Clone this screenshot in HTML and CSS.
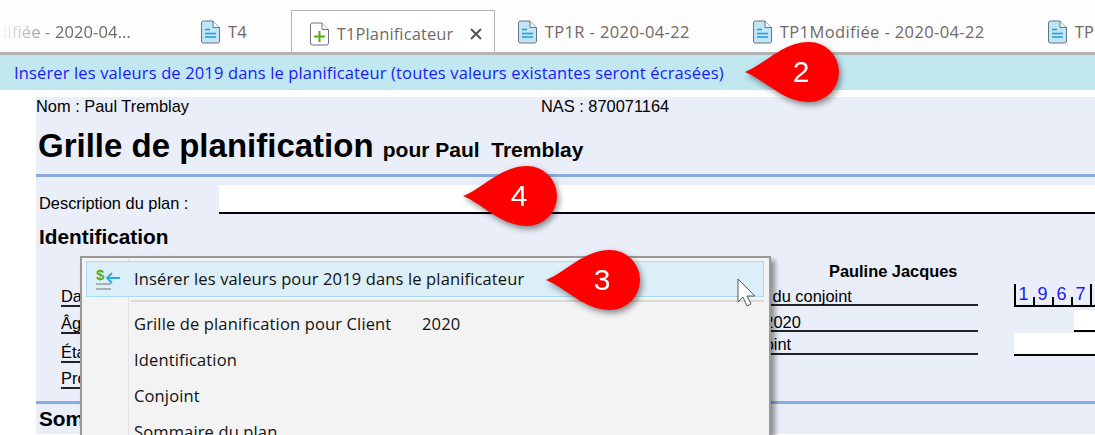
FILE: index.html
```html
<!DOCTYPE html>
<html lang="fr">
<head>
    <meta charset="UTF-8">
    <meta name="viewport" content="width=device-width, initial-scale=1.0">
    <title>T1Planificateur</title>
    <link rel="stylesheet" href="styles.css">
</head>
<body>
    <header class="tab-bar">
        <div class="tab tab-first"><span>TP1Modifiée - 2020-04...</span></div>
        <div class="tab tab-t4">
            <svg class="doc-icon" viewBox="0 0 19 24"><path d="M.5 3a2 2 0 0 1 2-2H12l6.500 6.500V21a2 2 0 0 1-2 2h-14a2 2 0 0 1-2-2z" fill="#bfe5f6" stroke="#68757c"/><path d="M12 1v6.500h6.500" fill="#eef8fc" stroke="#68757c"/><path d="M4 9.500h5M4 13.500h11M4 17h11" stroke="#1c9fe2" stroke-width="1.500"/></svg>
            <span>T4</span>
        </div>
        <div class="tab tab-active">
            <svg class="doc-icon" viewBox="0 0 19 24"><path d="M.5 3a2 2 0 0 1 2-2H12l6.500 6.500V21a2 2 0 0 1-2 2h-14a2 2 0 0 1-2-2z" fill="#fff" stroke="#68757c"/><path d="M12 1v6.500h6.500" fill="#fff" stroke="#68757c"/><path d="M9.500 9v11M4 14.500h11" stroke="#5fa813" stroke-width="2"/></svg>
            <span>T1Planificateur</span>
            <svg class="tab-close" viewBox="0 0 12 12"><path d="M1 1l10 10M11 1L1 11" stroke="#555" stroke-width="2"/></svg>
        </div>
        <div class="tab tab-dated">
            <svg class="doc-icon" viewBox="0 0 19 24"><path d="M.5 3a2 2 0 0 1 2-2H12l6.500 6.500V21a2 2 0 0 1-2 2h-14a2 2 0 0 1-2-2z" fill="#bfe5f6" stroke="#68757c"/><path d="M12 1v6.500h6.500" fill="#eef8fc" stroke="#68757c"/><path d="M4 9.500h5M4 13.500h11M4 17h11" stroke="#1c9fe2" stroke-width="1.500"/></svg>
            <span>TP1R - 2020-04-22</span>
        </div>
        <div class="tab tab-dated">
            <svg class="doc-icon" viewBox="0 0 19 24"><path d="M.5 3a2 2 0 0 1 2-2H12l6.500 6.500V21a2 2 0 0 1-2 2h-14a2 2 0 0 1-2-2z" fill="#bfe5f6" stroke="#68757c"/><path d="M12 1v6.500h6.500" fill="#eef8fc" stroke="#68757c"/><path d="M4 9.500h5M4 13.500h11M4 17h11" stroke="#1c9fe2" stroke-width="1.500"/></svg>
            <span>TP1Modifiée - 2020-04-22</span>
        </div>
        <div class="tab">
            <svg class="doc-icon" viewBox="0 0 19 24"><path d="M.5 3a2 2 0 0 1 2-2H12l6.500 6.500V21a2 2 0 0 1-2 2h-14a2 2 0 0 1-2-2z" fill="#bfe5f6" stroke="#68757c"/><path d="M12 1v6.500h6.500" fill="#eef8fc" stroke="#68757c"/><path d="M4 9.500h5M4 13.500h11M4 17h11" stroke="#1c9fe2" stroke-width="1.500"/></svg>
            <span>TP1</span>
        </div>
    </header>

    <div class="info-bar">Insérer les valeurs de 2019 dans le planificateur (toutes valeurs existantes seront écrasées)</div>

    <main class="plan">
        <div class="plan-head">
            <span class="plan-name">Nom : Paul Tremblay</span>
            <span>NAS : 870071164</span>
        </div>
        <h1 class="plan-title">Grille de planification <small>pour Paul&nbsp; Tremblay</small></h1>
        <div class="plan-desc">
            <span class="plan-desc-label">Description du plan :</span>
            <div class="field"></div>
        </div>
        <h2 class="section-title">Identification</h2>
        <div class="ident">
            <div class="ident-left">
                <div class="line line-a">Date de naissance</div>
                <div class="line line-b">Âge à la fin de 2020</div>
                <div class="line line-c">État civil</div>
                <div class="line line-d">Province</div>
            </div>
            <div class="ident-right">
                <div class="spouse-name">Pauline Jacques</div>
                <div class="ident-row row-a">
                    <div class="line">Date naissance du conjoint</div>
                    <div class="comb">
                        <span class="digit major">1</span>
                        <span class="digit">9</span>
                        <span class="digit">6</span>
                        <span class="digit">7</span>
                        <span class="digit major"></span>
                    </div>
                </div>
                <div class="ident-row row-b">
                    <div class="line">Âge à la fin de 2020</div>
                    <div class="field field-short"></div>
                </div>
                <div class="ident-row row-c">
                    <div class="line">État civil conjoint</div>
                    <div class="field"></div>
                </div>
            </div>
        </div>
        <h2 class="section-title section-next">Sommaire du plan</h2>
    </main>

    <div class="menu">
        <div class="menu-item menu-item-hot">
            <svg class="menu-icon" viewBox="0 0 26 26">
                <text x="1" y="15" class="menu-icon-dollar">$</text>
                <path d="M25 13H12M17 8l-5 5 5 5" fill="none" stroke="#29a9e1" stroke-width="1.800"/>
                <path d="M1 19h15M1 24h15" stroke="#9a9a9a" stroke-width="1.500"/>
            </svg>
            <span>Insérer les valeurs pour 2019 dans le planificateur</span>
        </div>
        <div class="menu-sep"></div>
        <div class="menu-item"><span class="menu-wide">Grille de planification pour Client</span><span>2020</span></div>
        <div class="menu-item">Identification</div>
        <div class="menu-item">Conjoint</div>
        <div class="menu-item">Sommaire du plan</div>
    </div>

    <svg class="cursor" viewBox="0 0 20 29"><path d="M1 1v23l5-5 4 9 4-2-4-8h8z" fill="#fff" stroke="#555"/></svg>

    <div class="callout callout-2">
        <svg viewBox="0 0 94 60"><path d="M0 30C20 22 38 0 64 0a30 30 0 0 1 0 60C38 60 20 38 0 30z" fill="#f00"/></svg>
        <span>2</span>
    </div>
    <div class="callout callout-3">
        <svg viewBox="0 0 94 60"><path d="M0 30C20 22 38 0 64 0a30 30 0 0 1 0 60C38 60 20 38 0 30z" fill="#f00"/></svg>
        <span>3</span>
    </div>
    <div class="callout callout-4">
        <svg viewBox="0 0 94 60"><path d="M0 30C20 22 38 0 64 0a30 30 0 0 1 0 60C38 60 20 38 0 30z" fill="#f00"/></svg>
        <span>4</span>
    </div>
</body>
</html>
```

FILE: styles.css
```css
html, body {
    height: 435px;
    overflow: hidden;
}

body {
    margin: 0;
    position: relative;
    background-color: #fff;
    color: #000;
    font-family: "Liberation Sans", Arial, sans-serif;
    font-size: 16.400px;
}

/* tabs */
.tab-bar {
    display: flex;
    align-items: stretch;
    height: 52px;
    background-color: #fdfdfd;
    border-bottom: 3px solid #b4b4b4;
    overflow: hidden;
    font-family: "Open Sans", sans-serif;
    font-size: 16.500px;
    letter-spacing: .12px;
    color: #6f6a66;
}

.tab {
    display: flex;
    align-items: center;
    flex-shrink: 0;
    gap: 8px;
    padding: 11px 40px 0 23px;
    white-space: nowrap;
}

.tab-dated {
    letter-spacing: .38px;
}

.tab-first {
    width: 131px;
    padding: 11px 47px 0 0;
    justify-content: flex-end;
    overflow: hidden;
    -webkit-mask-image: linear-gradient(to right, transparent, #000 60px);
    mask-image: linear-gradient(to right, transparent, #000 60px);
}

.tab-t4 {
    padding-right: 44px;
}

.tab-active {
    margin-top: 10px;
    margin-bottom: -3px;
    width: 204px;
    box-sizing: border-box;
    padding: 1px 10px 0 18px;
    background-color: #fff;
    border: 1px solid #b4b4b4;
    border-bottom: none;
}

.doc-icon {
    width: 19px;
    height: 24px;
    flex-shrink: 0;
}

.tab-close {
    width: 12px;
    height: 12px;
    margin-left: 9px;
}

/* blue bar */
.info-bar {
    height: 35px;
    line-height: 36px;
    padding-left: 14px;
    background-color: #c1e8f0;
    color: #1a1aff;
    font-family: "Open Sans", sans-serif;
    font-size: 16.500px;
    letter-spacing: .14px;
    white-space: nowrap;
}

/* form */
.plan {
    margin: 7px 0 0 36px;
    background-color: #e9eef8;
}

.plan-head {
    display: flex;
    height: 20px;
    line-height: 19px;
}

.plan-name {
    width: 505px;
}

.plan-title {
    margin: 0;
    padding: 10px 0 0 2px;
    height: 47px;
    border-bottom: 3px solid #8aacdc;
    font-size: 33px;
    line-height: 38px;
    white-space: nowrap;
}

.plan-title small {
    font-size: 21px;
}

.plan-desc {
    display: flex;
    margin-top: 8px;
    height: 29px;
}

.plan-desc-label {
    width: 180px;
    padding: 9px 0 0 3px;
    line-height: 18px;
}

.field {
    flex: 1;
    background-color: #fff;
    border-bottom: 2px solid #000;
}

.section-title {
    margin: 0;
    padding-left: 3px;
    font-size: 20.800px;
    line-height: 22px;
}

.plan-desc + .section-title {
    margin-top: 12px;
}

.ident {
    display: flex;
    height: 153px;
    border-bottom: 3px solid #8aacdc;
}

.ident-left {
    flex: 0 0 619px;
    padding-left: 25px;
    box-sizing: border-box;
}

.ident-right {
    flex: 1;
    min-width: 0;
    padding-top: 14px;
}

.line {
    border-bottom: 2px solid #222;
    line-height: 18px;
    white-space: nowrap;
    box-sizing: border-box;
}

.line-a { margin-top: 30px; height: 29px; padding-top: 9px; }
.line-b { height: 27px; padding-top: 7px; }
.line-c { height: 29px; padding-top: 9px; }
.line-d { height: 26px; padding-top: 6px; }

.spouse-name {
    padding-left: 174px;
    height: 18px;
    line-height: 18px;
    font-weight: bold;
}

.ident-row {
    display: flex;
    gap: 36px;
}

.ident-row .line {
    width: 323px;
    flex-shrink: 0;
}

.row-a { height: 26px; }
.row-a .line { padding-top: 7px; }
.row-b { height: 26px; }
.row-b .line { padding-top: 7px; }
.row-b .field { margin-top: 4px; }
.row-c { height: 24px; }
.row-c .line { height: 23px; padding: 3px 0 0 14px; }
.row-c .field { margin-top: 1px; }

.comb {
    display: flex;
    flex: 1;
    box-sizing: border-box;
    height: 23px;
    margin-top: 4px;
    border-bottom: 2px solid #000;
    overflow: hidden;
}

.digit {
    flex: 0 0 19px;
    text-align: center;
    line-height: 20px;
    font-size: 18px;
    color: #1a1aff;
    background: linear-gradient(#000, #000) left bottom / 2px 8px no-repeat;
}

.digit.major {
    background-size: 2px 21px;
}

.field-short {
    margin-left: 60px;
}

.section-next {
    height: 26px;
    padding-top: 4px;
    background-color: #e9eef8;
}

/* context menu */
.menu {
    position: absolute;
    left: 80px;
    top: 256px;
    width: 678px;
    height: 174px;
    padding: 3px 5px 0 4px;
    overflow: hidden;
    background: linear-gradient(to right, #f3f3f3 46px, #e3e3e3 46px, #e3e3e3 47px, #f3f3f3 47px);
    border: 2px solid #999;
    border-bottom: none;
    box-shadow: 4px 4px 5px rgba(0, 0, 0, .4);
    font-family: "Open Sans", sans-serif;
    font-size: 16.500px;
    letter-spacing: .14px;
    color: #111;
}

.menu-item {
    display: flex;
    align-items: center;
    height: 36px;
    padding-left: 48px;
    white-space: nowrap;
}

.menu-item-hot {
    box-sizing: border-box;
    padding: 0 0 2px 8px;
    gap: 13px;
    background-color: #dceef7;
    border: 1px solid #a9dcf5;
}

.menu-sep {
    height: 2px;
    margin: 3px 0 3px 45px;
    background-color: #d8d8d8;
}

.menu-icon {
    width: 26px;
    height: 26px;
    flex-shrink: 0;
}

.menu-icon-dollar {
    font-family: "Liberation Sans", sans-serif;
    font-size: 15px;
    font-weight: bold;
    fill: #5fa813;
}

.menu-wide {
    width: 288px;
}

.cursor {
    position: absolute;
    left: 737px;
    top: 278px;
    width: 20px;
    height: 29px;
}

/* numbered callouts */
.callout {
    position: absolute;
    width: 94px;
    height: 60px;
    filter: drop-shadow(2px 3px 3px rgba(0, 0, 0, .45));
}

.callout svg {
    display: block;
    width: 94px;
    height: 60px;
}

.callout span {
    position: absolute;
    left: 26px;
    top: 0;
    width: 60px;
    text-align: center;
    line-height: 60px;
    color: #fff;
    font-size: 30px;
}

.callout-2 { left: 745px; top: 42px; }
.callout-3 { left: 546px; top: 250px; }
.callout-4 { left: 463px; top: 166px; }
```
